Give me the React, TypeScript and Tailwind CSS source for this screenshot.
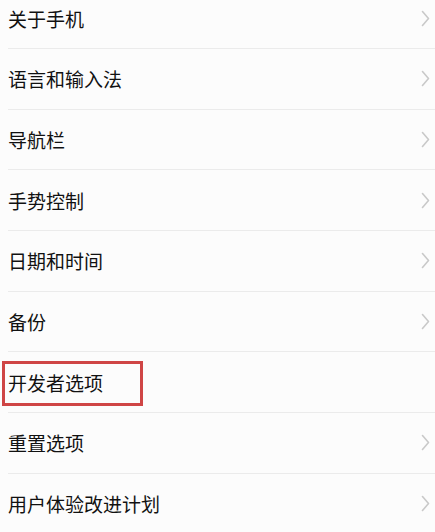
const items = [
  { label: '关于手机', arrow: true },
  { label: '语言和输入法', arrow: true },
  { label: '导航栏', arrow: true },
  { label: '手势控制', arrow: true },
  { label: '日期和时间', arrow: true },
  { label: '备份', arrow: true },
  { label: '开发者选项', arrow: false, highlight: true },
  { label: '重置选项', arrow: true },
  { label: '用户体验改进计划', arrow: true },
];

function Chevron() {
  return (
    <svg width="9" height="17" viewBox="0 0 9 17" fill="none" className="shrink-0">
      <path d="M1.5 1.5 L7.5 8.5 L1.5 15.5" stroke="#c9c9c9" strokeWidth="1.6" strokeLinecap="round" strokeLinejoin="round" />
    </svg>
  );
}

export default function App() {
  return (
    <div
      className="h-[532px] w-[435px] overflow-hidden bg-[#fcfcfc]"
      style={{ fontFamily: '"Noto Sans CJK SC", "Noto Sans", sans-serif' }}
    >
      <div className="mt-[-11.7px]">
        {items.map((item) => (
          <div key={item.label} className="relative h-[60.7px] pl-2">
            <div className="flex h-full items-center justify-between border-b border-[#ebebeb] pr-[5px]">
              <span className="text-[19px] leading-none text-[#111111]">{item.label}</span>
              {item.arrow && <Chevron />}
            </div>
            {item.highlight && (
              <div className="absolute left-[2px] top-[9px] h-[45px] w-[141px] border-[3px] border-[#cf4545]" />
            )}
          </div>
        ))}
      </div>
    </div>
  );
}
